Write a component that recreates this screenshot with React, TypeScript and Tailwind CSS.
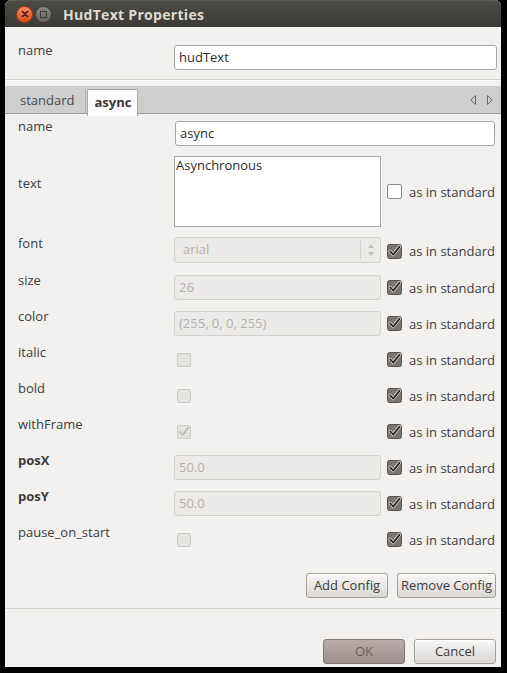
import React from "react";

const font = { fontFamily: '"Open Sans", "Noto Sans", sans-serif' };

function CheckOn() {
  return (
    <svg width="15" height="15" viewBox="0 0 15 15" className="shrink-0">
      <rect x="0.5" y="0.5" width="14" height="14" rx="2" fill="#7c746e" stroke="#5b544f" />
      <path d="M3.2 7.4 L6.2 10.6 L12.6 2.6" fill="none" stroke="#e8e5e2" strokeWidth="3.2" strokeLinecap="round" strokeLinejoin="round" />
      <path d="M3.2 7.4 L6.2 10.6 L12.6 2.6" fill="none" stroke="#2f2b28" strokeWidth="1.8" strokeLinecap="round" strokeLinejoin="round" />
    </svg>
  );
}

function CheckOff() {
  return <div className="w-[15px] h-[15px] shrink-0 rounded-[2px] border border-[#8d8985] bg-white" />;
}

function CheckDisabled({ checked }: { checked?: boolean }) {
  return (
    <div className="w-[14px] h-[14px] rounded-[2px] border border-[#cbc9c6] bg-[#e4e3e1] flex items-center justify-center">
      {checked && (
        <svg width="12" height="12" viewBox="0 0 12 12">
          <path d="M1.8 6 L4.6 9 L10.6 1.6" fill="none" stroke="#b9b6b3" strokeWidth="1.6" strokeLinecap="round" strokeLinejoin="round" />
        </svg>
      )}
    </div>
  );
}

function AsStd({ on }: { on: boolean }) {
  return (
    <div className="flex items-center gap-[7px] pl-[6px] h-full">
      {on ? <CheckOn /> : <CheckOff />}
      <span className="text-[13px] text-[#3c3c3c] leading-[16px]">as in standard</span>
    </div>
  );
}

function DisabledInput({ value }: { value: string }) {
  return (
    <div className="h-[25px] w-full rounded-[3px] border border-[#d4d2ce] bg-[#ebeae8] flex items-center px-[4px] text-[13px] text-[#b3b0ad]">
      {value}
    </div>
  );
}

function Label({ children, bold }: { children: React.ReactNode; bold?: boolean }) {
  return (
    <div className={`text-[13px] leading-[16px] text-[#3c3c3c] -mt-[3px] ${bold ? "font-bold" : ""}`}>
      {children}
    </div>
  );
}

function Btn({ children, w }: { children: React.ReactNode; w: string }) {
  return (
    <div className={`${w} h-[25px] rounded-[3px] border border-[#a4a09c] bg-gradient-to-b from-[#f8f7f6] to-[#dad8d5] flex items-center justify-center text-[13px] text-[#3c3c3c] shadow-[inset_0_1px_0_#ffffff]`}>
      {children}
    </div>
  );
}

export default function App() {
  return (
    <div className="w-[507px] h-[673px] bg-black overflow-hidden" style={font}>
      <div className="ml-[5px] w-[496px] h-[667px] flex flex-col bg-[#f2f1f0] rounded-t-[6px] overflow-hidden">
        {/* Title bar */}
        <div className="h-[27px] shrink-0 bg-gradient-to-b from-[#4c4b46] to-[#3b3a36] flex items-center border-t border-[#5a5954]">
          <div className="ml-[11px] w-[17px] h-[17px] rounded-full bg-gradient-to-b from-[#f6895b] to-[#dc4916] border border-[#9d3a14] flex items-center justify-center">
            <svg width="8" height="8" viewBox="0 0 8 8">
              <path d="M1.5 1.5 L6.5 6.5 M6.5 1.5 L1.5 6.5" stroke="#3a1a0c" strokeWidth="1.6" strokeLinecap="round" />
            </svg>
          </div>
          <div className="ml-[2px] w-[17px] h-[17px] rounded-full bg-gradient-to-b from-[#8a8984] to-[#66655f] border border-[#3d3c38] flex items-center justify-center">
            <div className="w-[7px] h-[7px] border border-[#3a3935]" />
          </div>
          <div className="ml-[11px] text-[14px] font-bold text-[#dfdbd2] tracking-[0.3px]">HudText Properties</div>
        </div>

        {/* top name */}
        <div className="h-[52px] shrink-0 flex items-start pl-[13px] pr-[4px] pt-[18px]">
          <div className="w-[156px] text-[13px] leading-[16px] text-[#3c3c3c] -mt-[3px]">name</div>
          <div className="flex-1 h-[25px] rounded-[3px] border border-[#a9a7a3] bg-white flex items-center px-[4px] text-[13px] text-[#2c2c2c]">
            hudText
          </div>
        </div>
        <div className="h-[1px] bg-[#d6d4d0] shrink-0" />
        <div className="h-[1px] bg-[#fbfbfa] shrink-0" />

        {/* tab bar */}
        <div className="mt-[5px] h-[28px] shrink-0 bg-[#cecece] border-b border-[#9e9e9e] flex items-end pl-[3px] relative">
          <div className="h-[24px] pl-[12px] pr-[11px] flex items-center text-[13px] text-[#4a4a4a] border-r border-[#b3b3b3]">standard</div>
          <div className="h-[27px] -mb-[3px] px-[6px] ml-[1px] bg-[#fcfcfc] rounded-t-[2px] border border-b-0 border-[#a8a8a8] flex items-center text-[13px] font-bold text-[#3a3a3a]">
            async
          </div>
          <div className="absolute right-[8px] top-[9px] flex gap-[11px]">
            <svg width="6" height="10" viewBox="0 0 6 10">
              <path d="M5.5 0.5 L0.8 5 L5.5 9.5 Z" fill="none" stroke="#6a6a6a" strokeWidth="1" />
            </svg>
            <svg width="6" height="10" viewBox="0 0 6 10">
              <path d="M0.5 0.5 L5.2 5 L0.5 9.5 Z" fill="none" stroke="#6a6a6a" strokeWidth="1" />
            </svg>
          </div>
        </div>

        {/* tab content */}
        <div className="pt-[7px] pl-[13px] pr-[6px] grid grid-cols-[156px_207px_1fr] gap-y-[11px] items-start">
          <Label>name</Label>
          <div className="col-span-2 pl-[1px]">
            <div className="h-[25px] rounded-[3px] border border-[#a9a7a3] bg-white flex items-center px-[4px] text-[13px] text-[#2c2c2c]">async</div>
          </div>

          <div className="-mt-[1px] h-[71px] flex items-center">
            <div className="text-[13px] leading-[16px] text-[#3c3c3c] -mt-[17px]">text</div>
          </div>
          <div className="h-[71px] border border-[#a9a7a3] bg-white px-[1px] text-[13px] leading-[16px] text-[#2c2c2c] -mt-[1px]">
            Asynchronous
          </div>
          <div className="h-[71px] -mt-[1px]">
            <AsStd on={false} />
          </div>

          <Label>font</Label>
          <div className="h-[26px] -mt-[1px] rounded-[3px] border border-[#d4d2ce] bg-[#ebeae8] flex items-center text-[13px] text-[#b3b0ad]">
            <span className="flex-1 pl-[8px]">arial</span>
            <div className="w-[1px] h-[18px] bg-[#d2d0cc]" />
            <div className="w-[19px] flex flex-col items-center gap-[4px]">
              <svg width="6" height="4" viewBox="0 0 6 4"><path d="M0 4 L3 0 L6 4 Z" fill="#c3c1be" /></svg>
              <svg width="6" height="4" viewBox="0 0 6 4"><path d="M0 0 L3 4 L6 0 Z" fill="#c3c1be" /></svg>
            </div>
          </div>
          <div className="h-[26px]"><AsStd on /></div>

          <Label>size</Label>
          <DisabledInput value="26" />
          <div className="h-[25px]"><AsStd on /></div>

          <Label>color</Label>
          <DisabledInput value="(255, 0, 0, 255)" />
          <div className="h-[25px]"><AsStd on /></div>

          <Label>italic</Label>
          <div className="h-[25px] flex items-center pl-[3px]"><CheckDisabled /></div>
          <div className="h-[25px]"><AsStd on /></div>

          <Label>bold</Label>
          <div className="h-[25px] flex items-center pl-[3px]"><CheckDisabled /></div>
          <div className="h-[25px]"><AsStd on /></div>

          <Label>withFrame</Label>
          <div className="h-[25px] flex items-center pl-[3px]"><CheckDisabled checked /></div>
          <div className="h-[25px]"><AsStd on /></div>

          <Label bold>posX</Label>
          <DisabledInput value="50.0" />
          <div className="h-[25px]"><AsStd on /></div>

          <Label bold>posY</Label>
          <DisabledInput value="50.0" />
          <div className="h-[25px]"><AsStd on /></div>

          <Label>pause_on_start</Label>
          <div className="h-[25px] flex items-center pl-[3px]"><CheckDisabled /></div>
          <div className="h-[25px]"><AsStd on /></div>
        </div>

        {/* config buttons */}
        <div className="mt-[21px] flex justify-end gap-[9px] pr-[5px]">
          <Btn w="w-[82px]">Add Config</Btn>
          <Btn w="w-[99px]">Remove Config</Btn>
        </div>

        <div className="mt-[10px] h-[1px] bg-[#d6d4d0]" />

        <div className="mt-[30px] flex justify-end gap-[9px] pr-[5px]">
          <div className="w-[82px] h-[25px] rounded-[3px] border border-[#7f7571] bg-gradient-to-b from-[#b7aca8] to-[#9b908c] flex items-center justify-center text-[13px] text-[#6a605c]">
            OK
          </div>
          <Btn w="w-[82px]">Cancel</Btn>
        </div>
      </div>
    </div>
  );
}
